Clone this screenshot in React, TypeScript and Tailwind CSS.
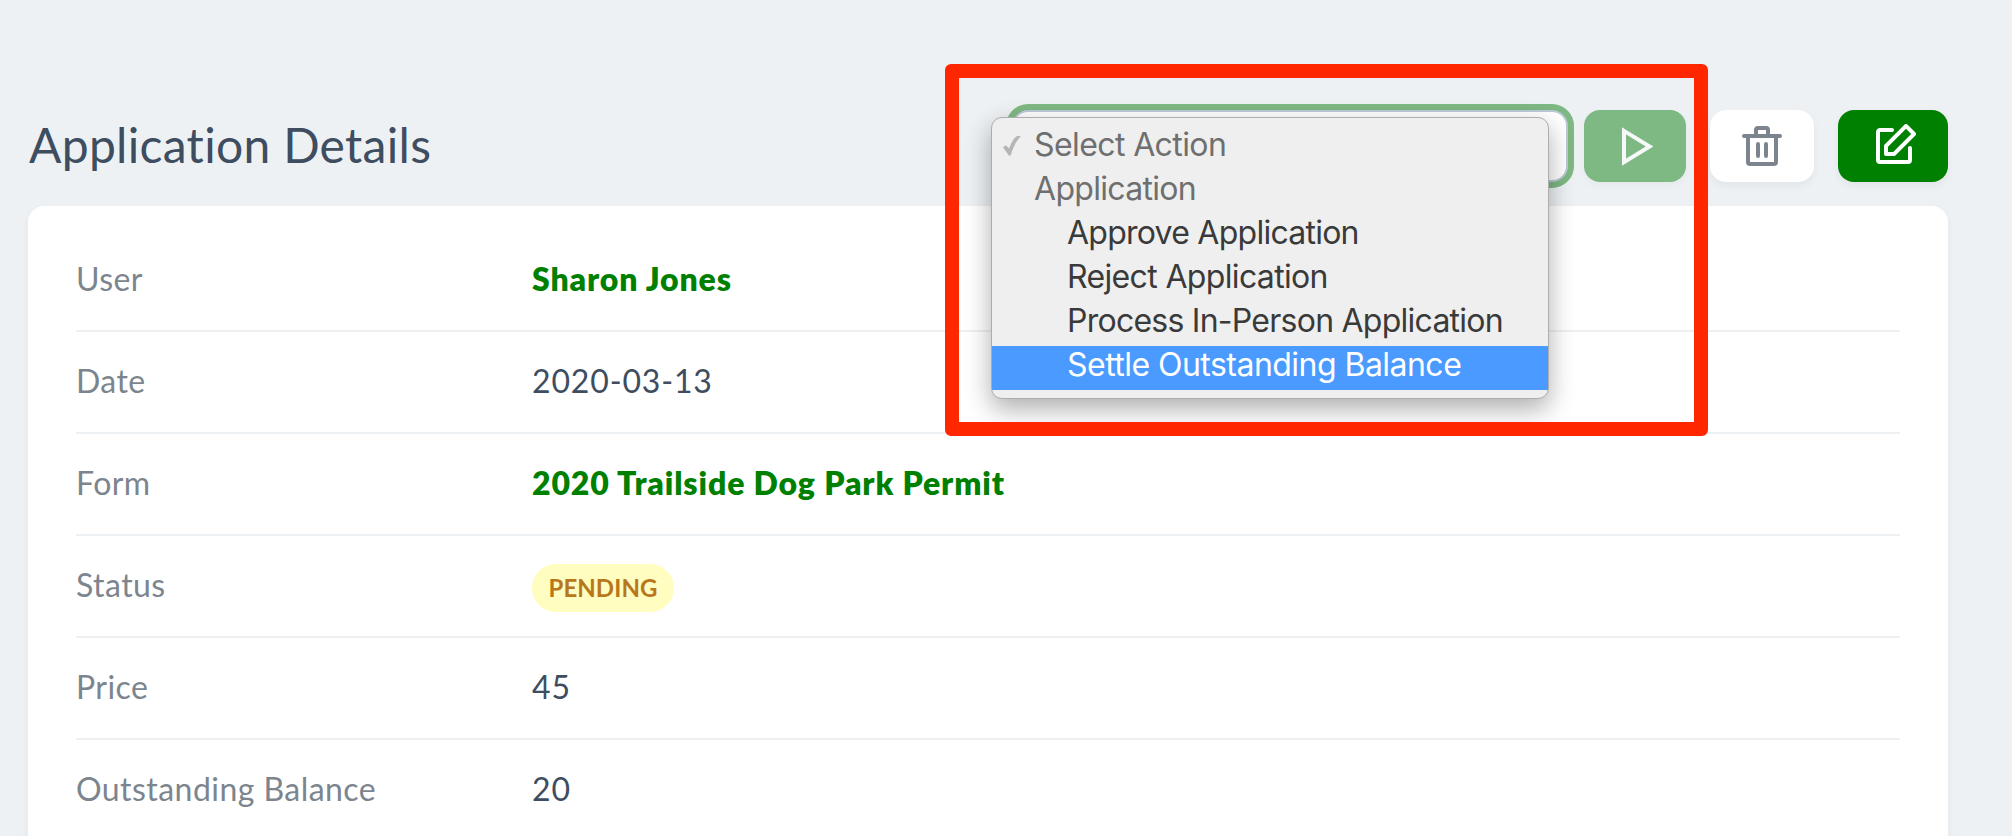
import React from 'react';

const menuItems = [
  { label: 'Select Action', kind: 'placeholder', tracking: 'tracking-[-0.6px]' },
  { label: 'Application', kind: 'group', tracking: 'tracking-[-0.7px]' },
  { label: 'Approve Application', kind: 'option', tracking: 'tracking-[-0.75px]' },
  { label: 'Reject Application', kind: 'option', tracking: 'tracking-[-0.65px]' },
  { label: 'Process In-Person Application', kind: 'option', tracking: 'tracking-[-0.75px]' },
  { label: 'Settle Outstanding Balance', kind: 'active', tracking: 'tracking-[-0.53px]' },
];

const itemStyles: Record<string, string> = {
  placeholder: 'pl-[42px] text-[#6f6f6f]',
  group: 'pl-[42px] text-[#6f6f6f]',
  option: 'pl-[75px] text-[#3a3a3a]',
  active: 'pl-[75px] bg-[#4a9aff] text-white',
};

function ActionMenu() {
  return (
    <div className="absolute -left-[23px] top-[5px] z-10 w-[558px] rounded-[11px] border border-[#adadad] bg-[#efefef] py-2 font-['Inter',sans-serif] text-[32px] shadow-[0_10px_26px_rgba(0,0,0,0.32)]">
      {menuItems.map((item) => (
        <div key={item.label} className={`relative flex h-11 items-center whitespace-nowrap pb-[7px] ${item.tracking} ${itemStyles[item.kind]}`}>
          {item.kind === 'placeholder' && (
            <svg className="absolute left-[11px] top-[10px] h-5 w-[18px]" viewBox="0 0 18 20">
              <path d="M0 11.2 L2.8 9.2 L6 12.6 C8 7 10.4 2.4 13.4 .4 C14.8 0 16.4 0 17.8 .2 C13 5 9.8 11.8 7.6 19.6 L5.8 19.6 Z" fill="#b5b5b5" />
            </svg>
          )}
          <span>{item.label}</span>
        </div>
      ))}
    </div>
  );
}

function Row({ label, children, last }: { label: string; children: React.ReactNode; last?: boolean }) {
  return (
    <div className={`flex h-[102px] ${last ? '' : 'border-b-2 border-[#edf1f4]'}`}>
      <div className="w-1/4 pt-[25px] leading-[48px] text-[#7c858e]">{label}</div>
      <div className="w-3/4 pt-[25px] leading-[48px] tracking-[0.85px] text-[#3e4d60]">{children}</div>
    </div>
  );
}

export default function App() {
  return (
    <div className="h-[836px] w-[2012px] overflow-hidden bg-[#edf1f4] font-['Lato',sans-serif]">
      <header className="flex h-[206px] items-start pl-7 pr-16 pt-[110px]">
        <h1 className="flex-1 whitespace-nowrap pl-px text-[48px] leading-[70px] tracking-[0.3px] text-[#3e4d60]">Application Details</h1>
        <div className="relative h-[72px] w-[556px] rounded-2xl border-2 border-[#bacad6] bg-white ring-6 ring-[#7eb882]">
          <ActionMenu />
        </div>
        <button className="ml-4 flex h-[72px] w-[102px] items-center justify-center rounded-2xl bg-[#7eb882] shadow-[0_4px_8px_rgba(0,0,0,0.03)]">
          <svg width="32" height="39" viewBox="0 0 32 39" className="ml-1.5" fill="none" stroke="#f6f8fa" strokeWidth="4">
            <path d="M2 3.9 L27.6 19.5 L2 35.1 Z" />
          </svg>
        </button>
        <button className="ml-6 flex h-[72px] w-[104px] items-center justify-center rounded-2xl bg-white text-[#7c858e] shadow-[0_4px_8px_rgba(0,0,0,0.05)]">
          <svg width="40" height="40" viewBox="0 0 20 20" fill="currentColor">
            <path d="M6 4V2a2 2 0 0 1 2-2h4a2 2 0 0 1 2 2v2h5a1 1 0 0 1 0 2h-1v12a2 2 0 0 1-2 2H4a2 2 0 0 1-2-2V6H1a1 1 0 1 1 0-2h5zM4 6v12h12V6H4zm8-2V2H8v2h4zM8 8a1 1 0 0 1 1 1v6a1 1 0 0 1-2 0V9a1 1 0 0 1 1-1zm4 0a1 1 0 0 1 1 1v6a1 1 0 0 1-2 0V9a1 1 0 0 1 1-1z" />
          </svg>
        </button>
        <button className="ml-6 flex h-[72px] w-[110px] items-center justify-center rounded-2xl bg-[#008000] pb-1 pl-1.5 text-white shadow-[0_4px_8px_rgba(0,0,0,0.05)]">
          <svg width="40" height="40" viewBox="0 0 20 20" fill="currentColor">
            <path d="M4.3 10.3l10-10a1 1 0 0 1 1.4 0l4 4a1 1 0 0 1 0 1.4l-10 10a1 1 0 0 1-.7.3H5a1 1 0 0 1-1-1v-4a1 1 0 0 1 .3-.7zM6 14h2.59l9-9L15 2.41l-9 9V14zm10-2a1 1 0 0 1 2 0v6a2 2 0 0 1-2 2H2a2 2 0 0 1-2-2V4c0-1.1.9-2 2-2h6a1 1 0 1 1 0 2H2v14h14v-6z" />
          </svg>
        </button>
      </header>

      <main className="ml-7 h-[700px] w-[1920px] rounded-2xl bg-white px-12 py-6 text-[32px] tracking-[0.45px] shadow-[0_4px_8px_rgba(0,0,0,0.05)]">
        <Row label="User"><span className="font-extrabold tracking-[0.87px] text-[#008000]">Sharon Jones</span></Row>
        <Row label="Date">2020-03-13</Row>
        <Row label="Form"><span className="font-extrabold tracking-[0.87px] text-[#008000]">2020 Trailside Dog Park Permit</span></Row>
        <Row label="Status">
          <span className="mt-[3px] flex h-12 w-[142px] items-center justify-center rounded-full bg-[#fffdbf] text-[24px] font-bold tracking-[0.1px] text-[#b9771c]">PENDING</span>
        </Row>
        <Row label="Price">45</Row>
        <Row label="Outstanding Balance" last>20</Row>
      </main>

      <div className="pointer-events-none absolute left-[945px] top-16 z-20 h-[372px] w-[763px] rounded-md border-[14px] border-[#ff2700]" />
    </div>
  );
}
